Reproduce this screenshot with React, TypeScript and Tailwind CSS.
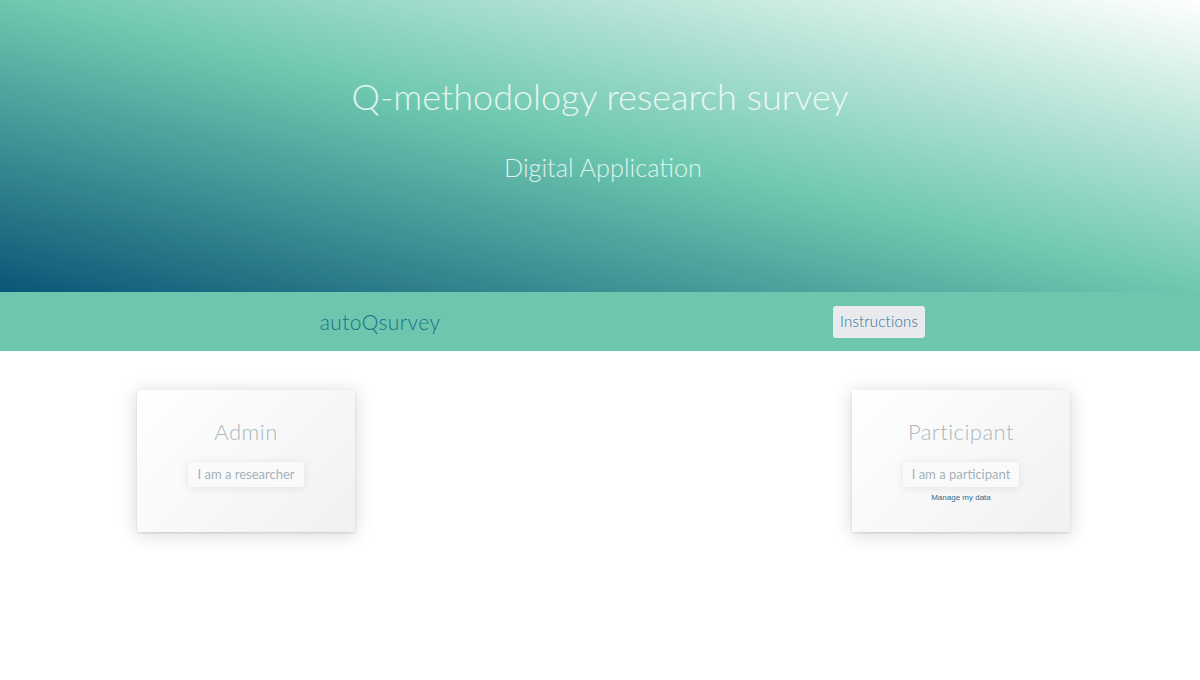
import React from "react";

function Card({ title, button, extra }: { title: string; button: string; extra?: boolean }) {
  return (
    <div className="w-[218px] h-[142px] bg-[linear-gradient(135deg,#ffffff_0%,#f1f1f1_100%)] shadow-[0_2px_18px_rgba(0,0,0,0.16),0_1px_2px_rgba(0,0,0,0.12)] flex flex-col items-center pt-[29px]">
      <div className="font-['Lato',sans-serif] text-[22px] font-light leading-[26px] text-[#a7b8c1] tracking-[0.5px]">
        {title}
      </div>
      <div className="mt-[17px] h-[25px] px-[9px] flex items-center bg-[#fafafa] rounded-[2px] shadow-[0_1px_8px_rgba(0,0,0,0.09)] font-['Lato',sans-serif] text-[13px] text-[#a3b2bb]">
        {button}
      </div>
      {extra && (
        <div className="mt-[6px] font-['Liberation_Sans',Arial,sans-serif] text-[8px] text-[#2d6b8c] leading-[10px]">
          Manage my data
        </div>
      )}
    </div>
  );
}

export default function App() {
  return (
    <div className="w-[1200px] min-h-[680px] bg-white font-['Lato',sans-serif]">
      <div className="h-[292px] bg-[linear-gradient(to_top_right,#0a5677_0%,#6ec8af_50%,#ffffff_100%)] flex flex-col items-center">
        <h1 className="mt-[74px] text-[36px] font-light leading-[44px] text-white/80">
          Q-methodology research survey
        </h1>
        <h2 className="mt-[34px] text-[25.3px] font-light leading-[30px] text-white/80 pl-[6px]">
          Digital Application
        </h2>
      </div>
      <div className="h-[59px] bg-[#6dc7ae] flex items-center">
        <div className="w-[600px] flex justify-center pl-[160px]">
          <span className="text-[21px] text-[#1d6f86] font-light tracking-[0.4px]">autoQsurvey</span>
        </div>
        <div className="flex-1 flex justify-start pl-[233px]">
          <span className="h-[32px] px-[7px] flex items-center bg-[#e9eaee] rounded-[3px] text-[15px] font-light text-[#2f6f93] tracking-[0.2px]">
            Instructions
          </span>
        </div>
      </div>
      <div className="flex justify-between pl-[137px] pr-[130px] pt-[39px]">
        <Card title="Admin" button="I am a researcher" />
        <Card title="Participant" button="I am a participant" extra />
      </div>
    </div>
  );
}
